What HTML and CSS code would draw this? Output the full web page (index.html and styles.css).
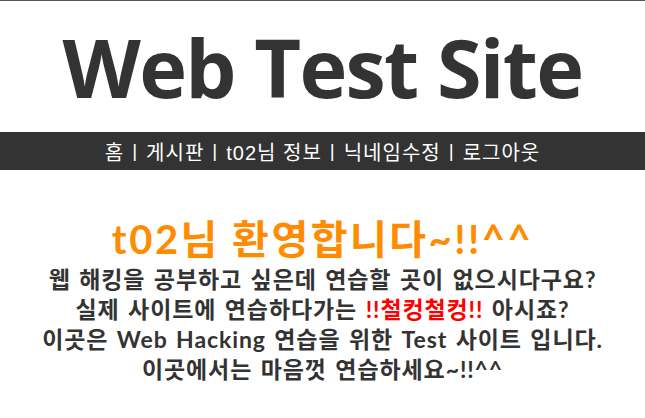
FILE: index.html
```html
<!DOCTYPE html>
<html lang="ko">
<head>
<meta charset="utf-8">
<title>Web Test Site</title>
<link rel="stylesheet" href="styles.css">
</head>
<body>
<header class="top">
  <h1 class="site-title">Web Test Site</h1>
  <nav class="nav">
    <a href="#">홈</a><span class="sep">|</span><a href="#">게시판</a><span class="sep">|</span><a href="#">t02님 정보</a><span class="sep">|</span><a href="#">닉네임수정</a><span class="sep">|</span><a href="#">로그아웃</a>
  </nav>
</header>
<main class="content">
  <h2 class="welcome">t02님 환영합니다~!!^^</h2>
  <p class="intro">웹 해킹을 공부하고 싶은데 연습할 곳이 없으시다구요?<br>
  실제 사이트에 연습하다가는 <span class="warn">!!철컹철컹!!</span> 아시죠?<br>
  이곳은 Web Hacking 연습을 위한 Test 사이트 입니다.<br>
  이곳에서는 마음껏 연습하세요~!!^^</p>
</main>
</body>
</html>
```
FILE: styles.css
```css
html, body {
  margin: 0;
  padding: 0;
  background: #fff;
}
body {
  border-top: 1px solid #555;
  font-family: "Open Sans", "Noto Sans CJK KR", sans-serif;
  color: #333;
}
.top {
  display: flex;
  flex-direction: column;
}
.site-title {
  margin: 0;
  padding-top: 16px;
  height: 131px;
  box-sizing: border-box;
  text-align: center;
  font-size: 81px;
  font-weight: 700;
  letter-spacing: -1.7px;
  line-height: 100px;
  color: #333;
}
.nav {
  height: 38px;
  background: #333;
  color: #fff;
  display: flex;
  justify-content: center;
  align-items: center;
  gap: 8px;
  font-family: "Liberation Sans", "Noto Sans CJK KR", sans-serif;
  font-size: 20px;
  letter-spacing: 1px;
}
.nav a {
  color: #fff;
  text-decoration: none;
}
.sep {
  font-size: 19px;
}
.content {
  padding-top: 44px;
  text-align: center;
}
.welcome {
  margin: 0;
  font-family: "Lato", "Noto Sans CJK KR", sans-serif;
  font-size: 40px;
  line-height: 50px;
  font-weight: 700;
  letter-spacing: 2.5px;
  color: #ff8c00;
}
.intro {
  margin: 0;
  font-family: "Lato", "Noto Sans CJK KR", sans-serif;
  font-size: 23px;
  line-height: 30px;
  font-weight: 700;
  letter-spacing: 0.9px;
  word-spacing: 2px;
  color: #333;
}
.warn {
  color: #ff0000;
}
```
